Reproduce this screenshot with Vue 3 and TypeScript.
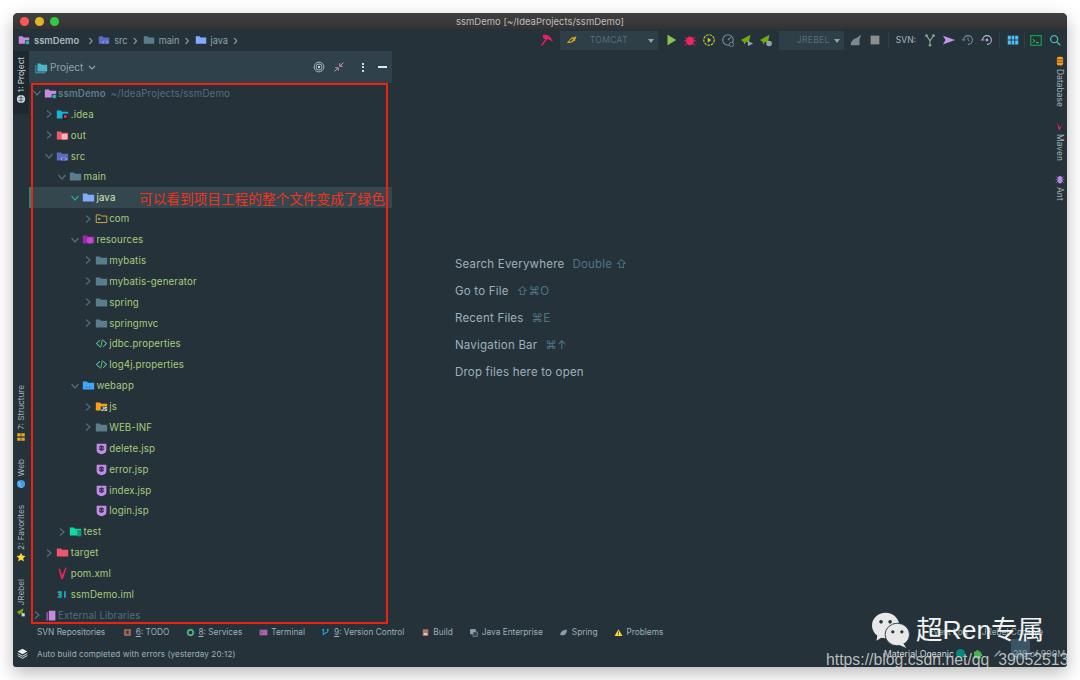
<script setup lang="ts">
interface TreeRow {
  depth: number;
  name: string;
  icon: string;
  arrow?: 'open' | 'closed';
  active?: boolean;
  dim?: boolean;
  hint?: string;
}

const folder = (fill: string, extra = '') =>
  `<path d="M1 3h5l1.5 1.5H15V13H1z" fill="${fill}"/>${extra}`;

const icons: Record<string, string> = {
  module: folder('#c78ae0', '<rect x="10" y="9" width="5" height="5" fill="#26c6a6" stroke="#25323a"/>'),
  idea: folder('#14b4d8', '<rect x="8" y="7" width="7" height="7" fill="#222"/><rect x="10" y="9" width="3" height="3" fill="#e8455a"/>'),
  out: folder('#ef5a6f', '<rect x="7" y="6" width="7" height="7" rx="1" fill="#f6b5bd"/>'),
  src: folder('#5c6bc0', '<path d="M8 9l-2 2 2 2M11 9l2 2-2 2" stroke="#7fc4f5" fill="none" stroke-width="1.2"/>'),
  plain: folder('#5a7d8c'),
  java: folder('#82aaff'),
  pkg: '<path d="M1.5 3.5h5L8 5h6.5v8h-13z" fill="none" stroke="#d7a64b" stroke-width="1.2"/><rect x="3.5" y="7.5" width="3" height="2" fill="#7ec4a8"/>',
  res: folder('#9c27b0', '<circle cx="10" cy="9" r="4" fill="#c04ac8"/>'),
  web: folder('#42a5f5', '<path d="M4.5 10.5a1 1 0 012 0zM8.5 10.5a1 1 0 012 0z" fill="#12456f"/>'),
  js: folder('#f9a01b', '<rect x="7" y="8" width="8" height="7" fill="#25323a"/><text x="7.5" y="14" font-size="6" font-weight="700" font-family="Inter,sans-serif" fill="#fff">JS</text>'),
  props: '<path d="M6 4L2 8l4 4M10 4l4 4-4 4" fill="none" stroke="#54c4cf" stroke-width="1.3"/><path d="M9 3L7 13" stroke="#8bc34a" stroke-width="1.1"/>',
  jsp: '<path d="M2 2h12v8c0 3-3 4-6 5-3-1-6-2-6-5z" fill="#c38be8"/><circle cx="8" cy="7.5" r="3.2" fill="#2c2440"/><path d="M7 6L5.6 7.5 7 9M9 6l1.4 1.5L9 9" fill="none" stroke="#d9b6f2"/>',
  test: folder('#12d8a4', '<rect x="10" y="6" width="5" height="8" fill="#0d9c78"/>'),
  target: folder('#ec5770'),
  maven: '<path d="M3 2l3.5 13h2L13 1l-1.500-.5L7.500 10 5 2z" fill="#ec2160"/>',
  iml: '<path d="M2 4h5v8H2v-2h3V6H2z" fill="#14b4d8"/><rect x="3" y="7" width="2" height="2" fill="#ef8a2c"/><path d="M10 4h2v8h-2z" fill="#14b4d8"/>',
  lib: '<path d="M3 4h2v10H3z" fill="#8a5fa5"/><path d="M6 2h8v12H6z" fill="#c78ae0"/>',
};

const tree: TreeRow[] = [
  { depth: 0, name: 'ssmDemo', icon: 'module', arrow: 'open', dim: true, hint: '~/IdeaProjects/ssmDemo' },
  { depth: 1, name: '.idea', icon: 'idea', arrow: 'closed' },
  { depth: 1, name: 'out', icon: 'out', arrow: 'closed' },
  { depth: 1, name: 'src', icon: 'src', arrow: 'open' },
  { depth: 2, name: 'main', icon: 'plain', arrow: 'open' },
  { depth: 3, name: 'java', icon: 'java', arrow: 'open', active: true },
  { depth: 4, name: 'com', icon: 'pkg', arrow: 'closed' },
  { depth: 3, name: 'resources', icon: 'res', arrow: 'open' },
  { depth: 4, name: 'mybatis', icon: 'plain', arrow: 'closed' },
  { depth: 4, name: 'mybatis-generator', icon: 'plain', arrow: 'closed' },
  { depth: 4, name: 'spring', icon: 'plain', arrow: 'closed' },
  { depth: 4, name: 'springmvc', icon: 'plain', arrow: 'closed' },
  { depth: 4, name: 'jdbc.properties', icon: 'props' },
  { depth: 4, name: 'log4j.properties', icon: 'props' },
  { depth: 3, name: 'webapp', icon: 'web', arrow: 'open' },
  { depth: 4, name: 'js', icon: 'js', arrow: 'closed' },
  { depth: 4, name: 'WEB-INF', icon: 'plain', arrow: 'closed' },
  { depth: 4, name: 'delete.jsp', icon: 'jsp' },
  { depth: 4, name: 'error.jsp', icon: 'jsp' },
  { depth: 4, name: 'index.jsp', icon: 'jsp' },
  { depth: 4, name: 'login.jsp', icon: 'jsp' },
  { depth: 2, name: 'test', icon: 'test', arrow: 'closed' },
  { depth: 1, name: 'target', icon: 'target', arrow: 'closed' },
  { depth: 1, name: 'pom.xml', icon: 'maven' },
  { depth: 1, name: 'ssmDemo.iml', icon: 'iml' },
  { depth: 0, name: 'External Libraries', icon: 'lib', arrow: 'closed', dim: true },
];

const crumbs = [
  { name: 'src', icon: 'src' },
  { name: 'main', icon: 'plain' },
  { name: 'java', icon: 'java' },
];

const hints = [
  { label: 'Search Everywhere', keys: 'Double ⇧' },
  { label: 'Go to File', keys: '⇧⌘O' },
  { label: 'Recent Files', keys: '⌘E' },
  { label: 'Navigation Bar', keys: '⌘↑' },
  { label: 'Drop files here to open', keys: '' },
];

const tools = [
  { key: '', label: 'SVN Repositories', icon: '' },
  { key: '6', label: ': TODO', icon: '<rect x="2" y="2" width="12" height="12" fill="#a1665a"/><path d="M6 5h4v5H6z" fill="#4a2c28"/>' },
  { key: '8', label: ': Services', icon: '<circle cx="8" cy="8" r="5" fill="none" stroke="#4caf7a" stroke-width="3.4"/>' },
  { key: '', label: 'Terminal', icon: '<rect x="1" y="3" width="14" height="10" fill="#a565a8"/><path d="M3 6l2 2-2 2" stroke="#2b2b33" fill="none"/>' },
  { key: '9', label: ': Version Control', icon: '<path d="M4 3v10M12 3v3c0 2-4 2-8 5" stroke="#29a3d8" stroke-width="1.8" fill="none"/><circle cx="4" cy="3" r="1.8" fill="#29a3d8"/><circle cx="12" cy="3" r="1.8" fill="#29a3d8"/>' },
  { key: '', label: 'Build', icon: '<rect x="3" y="2" width="10" height="12" rx="1" fill="#b0726a"/><rect x="5" y="9" width="6" height="3" fill="#e8d6d2"/>' },
  { key: '', label: 'Java Enterprise', icon: '<rect x="2" y="2" width="10" height="9" fill="#90a4ae"/><rect x="7" y="7" width="8" height="8" fill="#37474f" stroke="#90a4ae"/>' },
  { key: '', label: 'Spring', icon: '<path d="M2 12C3 5 9 3 14 3c0 6-3 10-8 10-2 0-3-1-4-1z" fill="#8d9ea6"/>' },
  { key: '', label: 'Problems', icon: '<path d="M8 2l7 12H1z" fill="#fdd835"/><path d="M8 6v4M8 11v1.5" stroke="#25323a" stroke-width="1.3"/>' },
];
</script>

<template>
  <div class="window">
    <header class="titlebar">
      <div class="lights"><i class="red"></i><i class="amber"></i><i class="green"></i></div>
      <span>ssmDemo [~/IdeaProjects/ssmDemo]</span>
    </header>

    <nav class="navbar">
      <div class="crumbs">
        <svg class="ico" viewBox="0 0 16 16" v-html="icons.module"></svg>
        <b class="project">ssmDemo</b>
        <span class="sep first">›</span>
        <template v-for="c in crumbs" :key="c.name">
          <svg class="ico" viewBox="0 0 16 16" v-html="icons[c.icon]"></svg>
          <span class="crumb">{{ c.name }}</span>
          <span class="sep">›</span>
        </template>
      </div>
      <div class="toolbar">
        <svg class="tb" viewBox="0 0 16 16"><path d="M3 14l7-9M5 3c4-1 7 1 9 5-3-2-5-3-8-2z" stroke="#e91e63" stroke-width="1.6" fill="#e91e63"/></svg>
        <div class="combo tomcat">
          <svg class="tb-small" viewBox="0 0 16 16"><path d="M1 12l6-7 7-2-2 6-6 3z" fill="#c9a227"/><path d="M5 10l4-3" stroke="#33302a" stroke-width="1.5"/></svg>
          <span>TOMCAT</span><i class="caret"></i>
        </div>
        <svg class="tb" viewBox="0 0 16 16"><path d="M4 2l10 6-10 6z" fill="#8bc34a"/></svg>
        <svg class="tb" viewBox="0 0 16 16"><ellipse cx="8" cy="9" rx="4.5" ry="5" fill="#f0245f"/><path d="M2 5l3 2M14 5l-3 2M1 9h3M12 9h3M2 14l3-2M14 14l-3-2" stroke="#f0245f"/></svg>
        <svg class="tb" viewBox="0 0 16 16"><circle cx="8" cy="8" r="6" fill="none" stroke="#c0ca33" stroke-width="1.3" stroke-dasharray="3 1"/><path d="M6.5 5l4 3-4 3z" fill="#c0ca33"/></svg>
        <svg class="tb" viewBox="0 0 16 16"><circle cx="8" cy="8" r="6" fill="none" stroke="#78909c" stroke-width="1.3"/><path d="M8 8l3-3" stroke="#78909c" stroke-width="1.3"/><circle cx="12" cy="13" r="2.5" fill="#25323a" stroke="#78909c"/></svg>
        <svg class="tb" viewBox="0 0 16 16"><path d="M1 8l11-6-2 9-3-1-2 3-1-3z" fill="#76a80f"/><path d="M9 9l6 3-6 3z" fill="#90a4ae"/></svg>
        <svg class="tb" viewBox="0 0 16 16"><path d="M1 8l11-6-2 9-3-1-2 3-1-3z" fill="#76a80f"/><circle cx="11.5" cy="12" r="3.2" fill="#90a4ae"/></svg>
        <div class="combo jrebel"><span>JREBEL</span><i class="caret"></i></div>
        <svg class="tb" viewBox="0 0 16 16"><path d="M2 14c0-5 3-7 6-8l6-4-2 5v7z" fill="#7b8a91"/></svg>
        <svg class="tb" viewBox="0 0 16 16"><rect x="3" y="3" width="10" height="10" fill="#8a8f92"/></svg>
        <i class="divider"></i>
        <span class="svn">SVN:</span>
        <svg class="tb" viewBox="0 0 16 16"><path d="M4 3l4 6 4-6M8 9v5" stroke="#7fa99b" stroke-width="1.3" fill="none"/><circle cx="4" cy="3" r="1.5" fill="#7fa99b"/><circle cx="12" cy="3" r="1.5" fill="#7fa99b"/><circle cx="8" cy="14" r="1.5" fill="#7fa99b"/></svg>
        <svg class="tb" viewBox="0 0 16 16"><path d="M1 3l14 5-14 5 3-5z" fill="#c792ea"/></svg>
        <svg class="tb" viewBox="0 0 16 16"><path d="M3 8a5 5 0 115 5" fill="none" stroke="#78909c" stroke-width="1.2"/><path d="M8 5v3l2 1.5M1 7l2 2 2-2" stroke="#78909c" fill="none"/></svg>
        <svg class="tb" viewBox="0 0 16 16"><path d="M3 8a5 5 0 115 5" fill="none" stroke="#b0bec5" stroke-width="1.2"/><circle cx="8" cy="8" r="1.6" fill="#c792ea"/><path d="M1 8h4" stroke="#b0bec5"/></svg>
        <i class="divider"></i>
        <svg class="tb" viewBox="0 0 16 16"><path d="M2 3h12v10H2z" fill="#4fc3f7"/><path d="M6 3v10M10 3v10M2 8h12" stroke="#25323a"/></svg>
        <i class="divider tight"></i>
        <svg class="tb" viewBox="0 0 16 16"><rect x="2" y="3" width="12" height="11" fill="#1b3a2d" stroke="#1fa35c" stroke-width="1.2"/><path d="M4.5 7l2 2-2 2M8 11h3" stroke="#6fcf97" fill="none"/></svg>
        <svg class="tb" viewBox="0 0 16 16"><circle cx="7" cy="7" r="4" fill="none" stroke="#4db6ac" stroke-width="1.5"/><path d="M10 10l4 4" stroke="#4db6ac" stroke-width="1.7"/></svg>
      </div>
    </nav>

    <div class="workspace">
      <aside class="rail left">
        <div class="rail-item current">
          <span>1: Project</span>
          <svg class="rail-ico" viewBox="0 0 16 16"><circle cx="8" cy="8" r="6.5" fill="#cfd8dc"/><path d="M4 6h8M4 10h8M8 2v12" stroke="#25323a"/></svg>
        </div>
        <div class="rail-spacer"></div>
        <div class="rail-item">
          <span>7: Structure</span>
          <svg class="rail-ico" viewBox="0 0 16 16"><rect x="2" y="2" width="12" height="5" fill="#e5a823"/><rect x="2" y="9" width="12" height="5" fill="#e5a823"/><path d="M8 2v12" stroke="#25323a"/></svg>
        </div>
        <div class="rail-item web">
          <span>Web</span>
          <svg class="rail-ico" viewBox="0 0 16 16"><circle cx="8" cy="8" r="6.5" fill="#3f9fe0"/><path d="M3 5c3 0 4 2 3 4s3 3 3 5" stroke="#cfe8fa" fill="none"/></svg>
        </div>
        <div class="rail-item fav">
          <span>2: Favorites</span>
          <svg class="rail-ico" viewBox="0 0 16 16"><path d="M8 1l2.200 4.700 5 .6-3.700 3.500 1 5.200L8 12.400 3.500 15l1-5.200L.8 6.300l5-.6z" fill="#fdd835"/></svg>
        </div>
        <div class="rail-item rebel">
          <span>JRebel</span>
          <svg class="rail-ico" viewBox="0 0 16 16"><path d="M1 8l11-6-2 9-3-1-2 3-1-3z" fill="#76a80f"/><rect x="9" y="10" width="5" height="5" fill="#cfd8dc"/></svg>
        </div>
      </aside>

      <section class="panel">
        <div class="panel-head">
          <svg class="ico big" viewBox="0 0 16 16"><path d="M3 3h4l1 1.500h7V13H3z" fill="#4db6c6"/><path d="M1 5v9.500h12" fill="none" stroke="#4db6c6"/></svg>
          <span class="panel-title">Project</span>
          <svg class="chev" viewBox="0 0 10 10"><path d="M2 4l3 3 3-3" fill="none" stroke="#90a4ae" stroke-width="1.1"/></svg>
          <div class="panel-actions">
            <svg class="pa" viewBox="0 0 16 16"><g fill="none" stroke="#cfd8dc"><circle cx="8" cy="8" r="6.5"/><circle cx="8" cy="8" r="4"/></g><circle cx="8" cy="8" r="1.6" fill="#cfd8dc"/></svg>
            <svg class="pa" viewBox="0 0 16 16"><path d="M14 2L9.500 6.500M9 3v4h4" stroke="#e79ac0" fill="none" stroke-width="1.2"/><path d="M2 14l4.500-4.500M7 13V9H3" stroke="#e79ac0" fill="none" stroke-width="1.2"/></svg>
            <span class="kebab"><i></i><i></i><i></i></span>
            <i class="minus"></i>
          </div>
        </div>
        <div class="tree">
          <div
            v-for="r in tree"
            :key="r.name"
            class="row"
            :class="{ active: r.active }"
            :style="{ paddingLeft: 2.5 + r.depth * 12.8 + 'px' }"
          >
            <svg v-if="r.arrow" class="arrow" viewBox="0 0 10 10">
              <path v-if="r.arrow === 'open'" d="M1.500 3l3.500 4 3.500-4" fill="none" stroke-width="1.2" />
              <path v-else d="M3 1.500l4 3.500-4 3.500" fill="none" stroke-width="1.2" />
            </svg>
            <span v-else class="arrow"></span>
            <svg class="ico row-ico" viewBox="0 0 16 16" v-html="icons[r.icon]"></svg>
            <span class="name" :class="{ dim: r.dim, root: r.depth === 0 && r.hint }">{{ r.name }}</span>
            <span v-if="r.hint" class="path">{{ r.hint }}</span>
          </div>
        </div>
      </section>

      <main class="editor">
        <p v-for="h in hints" :key="h.label">
          {{ h.label }}<span>{{ h.keys }}</span>
        </p>
      </main>

      <aside class="rail right">
        <div class="rail-item">
          <svg class="rail-ico" viewBox="0 0 16 16"><rect x="3" y="1" width="10" height="14" rx="3" fill="#f59c1a"/><path d="M3 6h10M3 10h10" stroke="#25323a"/></svg>
          <span>Database</span>
        </div>
        <div class="rail-item">
          <svg class="rail-ico" viewBox="0 0 16 16"><path d="M3 2l3 12h2l5-12-4.500 8L7 10z" fill="#ec2160"/></svg>
          <span>Maven</span>
        </div>
        <div class="rail-item">
          <svg class="rail-ico" viewBox="0 0 16 16"><ellipse cx="8" cy="9" rx="4" ry="6" fill="#b388e0"/><path d="M2 4l3 3M14 4l-3 3M1 9h3M12 9h3M2 14l3-3M14 14l-3-3" stroke="#b388e0"/></svg>
          <span>Ant</span>
        </div>
      </aside>
    </div>

    <div class="toolstrip">
      <span v-for="t in tools" :key="t.label" class="tool">
        <svg v-if="t.icon" viewBox="0 0 16 16" v-html="t.icon"></svg>
        <span><u v-if="t.key">{{ t.key }}</u>{{ t.label }}</span>
      </span>
      <span class="tool-right">
        <span>Event Log</span>
        <span>JRebel Console</span>
      </span>
    </div>

    <footer class="status">
      <svg viewBox="0 0 16 16"><path d="M8 1l7 4-7 4-7-4z" fill="#eceff1"/><path d="M1 8l7 4 7-4M1 11l7 4 7-4" fill="none" stroke="#eceff1" stroke-width="1.3"/></svg>
      <span class="status-text">Auto build completed with errors (yesterday 20:12)</span>
      <div class="status-right">
        <span class="theme">Material Oceanic</span>
        <i class="dot"></i>
        <svg class="puzzle" viewBox="0 0 16 16"><path d="M3 5h3a2 2 0 114 0h3v3a2 2 0 110 4v3H3z" fill="#4caf50"/></svg>
        <svg class="pencil" viewBox="0 0 16 16"><path d="M3 13l1-3 7-7 2 2-7 7z" fill="#78909c"/></svg>
        <span class="memory"><i></i>218 of 990M</span>
      </div>
    </footer>

    <!-- annotation drawn on top of the screenshot -->
    <div class="mark"></div>
    <span class="mark-note">可以看到项目工程的整个文件变成了绿色</span>
  </div>

  <!-- blog watermark -->
  <div class="wechat">
    <svg viewBox="0 0 46 42">
      <ellipse cx="17" cy="16" rx="15" ry="14" fill="#e8e8e8"/>
      <path d="M8 26l-1 7 8-5z" fill="#e8e8e8"/>
      <circle cx="12" cy="12" r="2" fill="#25323a"/><circle cx="22" cy="12" r="2" fill="#25323a"/>
      <ellipse cx="30" cy="26" rx="13.5" ry="12.5" fill="#e8e8e8" stroke="#25323a"/>
      <path d="M36 35l4 6-9-4z" fill="#e8e8e8"/>
      <circle cx="25" cy="23" r="1.8" fill="#25323a"/><circle cx="35" cy="23" r="1.8" fill="#25323a"/>
    </svg>
    <span>超Ren专属</span>
  </div>
  <span class="csdn">https://blog.csdn.net/qq_39052513</span>
</template>

<style>
html,
body {
  margin: 0;
  background: #fff;
}
</style>

<style scoped>
.window {
  position: relative;
  isolation: isolate;
  box-sizing: border-box;
  width: 1054px;
  height: 654px;
  margin: 13px;
  display: flex;
  flex-direction: column;
  background: #25323a;
  border-radius: 5px 5px 3px 3px;
  overflow: hidden;
  box-shadow: 0 6px 18px rgba(0, 0, 0, 0.28);
  font-family: Inter, 'Noto Sans', sans-serif;
  color: #b0bec5;
}

.titlebar {
  position: relative;
  height: 16px;
  flex: none;
  display: flex;
  align-items: center;
  justify-content: center;
  background: linear-gradient(#404040, #333);
  color: #bdbdbd;
  font-size: 9.5px;
}

.lights {
  position: absolute;
  left: 7px;
  top: 4px;
  display: flex;
  gap: 6px;
}

.lights i {
  width: 9px;
  height: 9px;
  border-radius: 50%;
}

.lights .red { background: #fc5753; }
.lights .amber { background: #e4b422; }
.lights .green { background: #34c748; }

.navbar {
  height: 22px;
  flex: none;
  display: flex;
  align-items: center;
  justify-content: space-between;
  padding: 0 3px 0 5px;
  font-size: 9.2px;
}

.crumbs {
  display: flex;
  align-items: center;
}

.ico {
  width: 12px;
  height: 12px;
  flex: none;
}

.project {
  margin-left: 4px;
  color: #a9b8bf;
  font-size: 9.4px;
  font-weight: 600;
}

.crumb {
  margin-left: 4px;
  color: #90a4ae;
}

.sep {
  margin: 0 5px;
  color: #90a4ae;
  font-size: 13px;
  line-height: 10px;
}

.sep.first {
  margin: 0 5px 0 9px;
}

.toolbar {
  display: flex;
  align-items: center;
}

.tb {
  width: 14px;
  height: 14px;
  margin: 0 2.5px;
  flex: none;
}

.tb-small {
  width: 12px;
  height: 12px;
  position: absolute;
  left: 6px;
  top: 3px;
}

.combo {
  position: relative;
  height: 19px;
  display: flex;
  align-items: center;
  background: #2e3f48;
  color: #546e7a;
  font-size: 8.5px;
  letter-spacing: 0.3px;
}

.tomcat {
  width: 98px;
  margin: 0 4px;
  padding-left: 30px;
  box-sizing: border-box;
}

.jrebel {
  width: 65px;
  margin: 0 3px;
  padding-left: 18px;
  box-sizing: border-box;
}

.caret {
  position: absolute;
  right: 4px;
  top: 8px;
  border: 3px solid transparent;
  border-top: 4px solid #90a4ae;
  border-bottom: 0;
}

.divider {
  width: 1px;
  height: 16px;
  margin: 0 3px;
  background: #2e3f48;
}

.divider.tight {
  margin: 0 1.5px;
}

.svn {
  margin: 0 4px;
  font-size: 8.5px;
  color: #a9b8bf;
}

.workspace {
  flex: 1;
  min-height: 0;
  display: flex;
}

.rail {
  flex: none;
  display: flex;
  flex-direction: column;
  color: #a3b2b9;
}

.rail.left {
  width: 16px;
  font-size: 8.2px;
}

.rail.right {
  width: 14px;
  padding-top: 5px;
  gap: 13.5px;
  font-size: 8.5px;
}

.rail-item {
  display: flex;
  flex-direction: column;
  align-items: center;
  gap: 2px;
}

.rail.right .rail-item {
  gap: 3px;
}

.rail-item span {
  writing-mode: vertical-rl;
}

.rail.left .rail-item span {
  transform: rotate(180deg);
}

.rail-ico {
  width: 10px;
  height: 10px;
  flex: none;
}

.rail-item.current {
  height: 63px;
  box-sizing: border-box;
  padding-top: 6px;
  background: #1e292f;
  color: #cfd8dc;
}

.rail-spacer {
  flex: 1;
}

.rail-item.web {
  margin-top: 17px;
}

.rail-item.fav {
  margin-top: 16px;
}

.rail-item.rebel {
  margin-top: 17px;
  margin-bottom: 8px;
}

.panel {
  width: 363px;
  flex: none;
  display: flex;
  flex-direction: column;
}

.panel-head {
  height: 32px;
  flex: none;
  display: flex;
  align-items: center;
  padding: 0 5px 0 6px;
  background: #2f424c;
}

.big {
  width: 13px;
  height: 13px;
}

.panel-title {
  margin-left: 2px;
  font-size: 10px;
  color: #90a4ae;
}

.chev {
  width: 10px;
  height: 10px;
  margin-left: 4px;
}

.panel-actions {
  margin-left: auto;
  display: flex;
  align-items: center;
}

.pa {
  width: 12px;
  height: 12px;
  margin-right: 8px;
}

.kebab {
  display: flex;
  flex-direction: column;
  gap: 1.5px;
  margin: 0 14px 0 9px;
}

.kebab i {
  width: 2px;
  height: 2px;
  background: #cfd8dc;
}

.minus {
  width: 9px;
  height: 2px;
  background: #e0e6e9;
}

.tree {
  flex: 1;
  min-height: 0;
}

.row {
  height: 20.88px;
  box-sizing: border-box;
  display: flex;
  align-items: center;
  font-size: 9.7px;
  letter-spacing: 0.15px;
}

.row.active {
  background: #34474f;
  box-shadow: inset 2px 0 0 #1c8a80;
}

.row.active .name {
  color: #d4e8b4;
}

.row.active .arrow path {
  stroke: #26a69a;
}

.arrow {
  width: 10px;
  height: 10px;
  flex: none;
  margin-right: 2px;
}

.arrow path {
  stroke: #546e7a;
}

.row-ico {
  width: 13px;
  height: 13px;
}

.name {
  margin-left: 1.5px;
  color: #a8cb7c;
}

.name.dim {
  color: #546e7a;
}

.name.root {
  color: #607d8b;
  font-weight: 600;
}

.path {
  margin-left: 5px;
  color: #546e7a;
}

.editor {
  flex: 1;
  padding: 199px 0 0 63px;
}

.editor p {
  margin: 0;
  height: 27px;
  display: flex;
  align-items: center;
  font-size: 11.5px;
  letter-spacing: 0.2px;
  color: #9fb0b8;
}

.editor p span {
  margin-left: 8px;
  color: #4f7585;
}

.toolstrip {
  height: 14px;
  flex: none;
  display: flex;
  align-items: center;
  padding-left: 24px;
  gap: 16.5px;
  font-size: 8.3px;
  color: #9fb0b8;
}

.tool {
  display: flex;
  align-items: center;
  gap: 3.5px;
}

.tool:first-child {
  margin-right: 1.5px;
}

.tool svg {
  width: 9px;
  height: 9px;
}

.tool-right {
  margin-left: auto;
  margin-right: 24px;
  display: flex;
  gap: 14px;
}

.status {
  height: 28px;
  flex: none;
  box-sizing: border-box;
  padding: 1px 0 0 4px;
  display: flex;
  align-items: center;
  font-size: 8.1px;
  color: #9fb0b8;
}

.status svg {
  width: 11px;
  height: 11px;
  flex: none;
}

.status-text {
  margin-left: 9px;
  letter-spacing: 0.1px;
}

.status-right {
  margin-left: auto;
  display: flex;
  align-items: center;
  gap: 7px;
  font-size: 8.8px;
}

.theme {
  color: #cfd8dc;
}

.dot {
  width: 9px;
  height: 9px;
  margin-left: -5px;
  border-radius: 50%;
  background: #00897b;
}

.puzzle {
  margin-right: 2px;
}

.pencil {
  margin-right: 3px;
}

.memory {
  position: relative;
  width: 54px;
  color: #90a4ae;
}

.memory i {
  position: absolute;
  left: -2px;
  top: -9px;
  width: 19px;
  height: 20px;
  background: #3a5563;
  z-index: -1;
}

.mark {
  position: absolute;
  left: 18px;
  top: 70px;
  width: 353px;
  height: 537px;
  border: 2px solid #f0220f;
  pointer-events: none;
}

.mark-note {
  position: absolute;
  left: 126px;
  top: 176px;
  font-family: 'Noto Sans CJK SC', sans-serif;
  font-size: 13.67px;
  line-height: 18px;
  color: #f0321e;
  white-space: nowrap;
}

.wechat {
  position: absolute;
  left: 870px;
  top: 611px;
  display: flex;
  align-items: center;
  gap: 4px;
  color: #f2f2f2;
  font-family: 'Liberation Sans', 'Noto Sans CJK SC', sans-serif;
  font-size: 26.5px;
  line-height: 38px;
}

.wechat svg {
  width: 42px;
  height: 38px;
}

.csdn {
  position: absolute;
  left: 826px;
  top: 650px;
  color: rgba(215, 215, 215, 0.85);
  font-family: 'Liberation Sans', sans-serif;
  font-size: 15.8px;
  line-height: 20px;
  white-space: nowrap;
}
</style>
